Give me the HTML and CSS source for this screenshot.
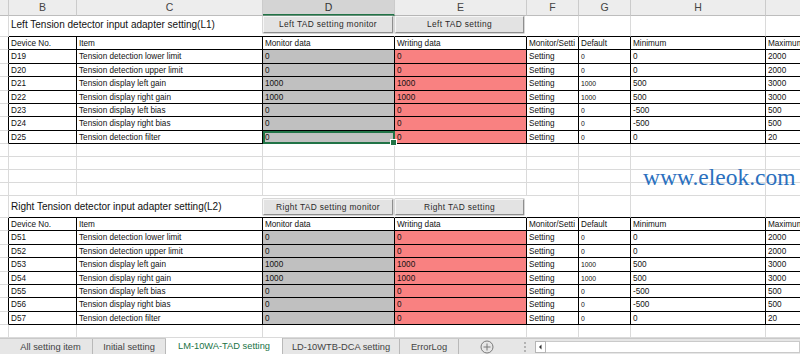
FILE: index.html
```html
<!DOCTYPE html>
<html>
<head>
<meta charset="utf-8">
<link rel="stylesheet" href="styles.css">
</head>
<body>
<div class="app">
  <div class="sheet">
    <div class="row colhead h16"><div></div><div>B</div><div>C</div><div class="sel">D</div><div>E</div><div>F</div><div>G</div><div>H</div><div></div></div>

    <div class="row title h21"><div></div><div class="ttl">Left Tension detector input adapter setting(L1)</div><div class="bcell"><div class="btn">Left TAD setting monitor</div></div><div class="bcell"><div class="btn b2">Left TAD setting</div></div><div></div><div></div><div></div><div></div></div>

    <div class="row t h13"><div></div><div>Device No.</div><div>Item</div><div>Monitor data</div><div>Writing data</div><div><span class="clip">Monitor/Setting</span></div><div>Default</div><div>Minimum</div><div>Maximum</div></div>
    <div class="row t h14"><div></div><div>D19</div><div>Tension detection lower limit</div><div class="mon">0</div><div class="wr">0</div><div>Setting</div><div class="def">0</div><div>0</div><div>2000</div></div>
    <div class="row t h13"><div></div><div>D20</div><div>Tension detection upper limit</div><div class="mon">0</div><div class="wr">0</div><div>Setting</div><div class="def">0</div><div>0</div><div>2000</div></div>
    <div class="row t h14"><div></div><div>D21</div><div>Tension display left gain</div><div class="mon">1000</div><div class="wr">1000</div><div>Setting</div><div class="def">1000</div><div>500</div><div>3000</div></div>
    <div class="row t h13"><div></div><div>D22</div><div>Tension display right gain</div><div class="mon">1000</div><div class="wr">1000</div><div>Setting</div><div class="def">1000</div><div>500</div><div>3000</div></div>
    <div class="row t h13"><div></div><div>D23</div><div>Tension display left bias</div><div class="mon">0</div><div class="wr">0</div><div>Setting</div><div class="def">0</div><div>-500</div><div>500</div></div>
    <div class="row t h14"><div></div><div>D24</div><div>Tension display right bias</div><div class="mon">0</div><div class="wr">0</div><div>Setting</div><div class="def">0</div><div>-500</div><div>500</div></div>
    <div class="row t h13"><div></div><div>D25</div><div>Tension detection filter</div><div class="mon cur">0</div><div class="wr">0</div><div>Setting</div><div class="def">0</div><div>0</div><div>20</div></div>

    <div class="row h13"><div></div><div></div><div></div><div></div><div></div><div></div><div></div><div></div><div></div></div>
    <div class="row h13"><div></div><div></div><div></div><div></div><div></div><div></div><div></div><div></div><div></div></div>
    <div class="row h13"><div></div><div></div><div></div><div></div><div></div><div></div><div></div><div></div><div></div></div>
    <div class="row h13"><div></div><div></div><div></div><div></div><div></div><div></div><div></div><div></div><div></div></div>

    <div class="row title h22"><div></div><div class="ttl t2">Right Tension detector input adapter setting(L2)</div><div class="bcell"><div class="btn m3">Right TAD setting monitor</div></div><div class="bcell"><div class="btn b2 m3">Right TAD setting</div></div><div></div><div></div><div></div><div></div></div>

    <div class="row t h13"><div></div><div>Device No.</div><div>Item</div><div>Monitor data</div><div>Writing data</div><div><span class="clip">Monitor/Setting</span></div><div>Default</div><div>Minimum</div><div>Maximum</div></div>
    <div class="row t h14"><div></div><div>D51</div><div>Tension detection lower limit</div><div class="mon">0</div><div class="wr">0</div><div>Setting</div><div class="def">0</div><div>0</div><div>2000</div></div>
    <div class="row t h13"><div></div><div>D52</div><div>Tension detection upper limit</div><div class="mon">0</div><div class="wr">0</div><div>Setting</div><div class="def">0</div><div>0</div><div>2000</div></div>
    <div class="row t h14"><div></div><div>D53</div><div>Tension display left gain</div><div class="mon">1000</div><div class="wr">1000</div><div>Setting</div><div class="def">1000</div><div>500</div><div>3000</div></div>
    <div class="row t h13"><div></div><div>D54</div><div>Tension display right gain</div><div class="mon">1000</div><div class="wr">1000</div><div>Setting</div><div class="def">1000</div><div>500</div><div>3000</div></div>
    <div class="row t h13"><div></div><div>D55</div><div>Tension display left bias</div><div class="mon">0</div><div class="wr">0</div><div>Setting</div><div class="def">0</div><div>-500</div><div>500</div></div>
    <div class="row t h14"><div></div><div>D56</div><div>Tension display right bias</div><div class="mon">0</div><div class="wr">0</div><div>Setting</div><div class="def">0</div><div>-500</div><div>500</div></div>
    <div class="row t h13"><div></div><div>D57</div><div>Tension detection filter</div><div class="mon">0</div><div class="wr">0</div><div>Setting</div><div class="def">0</div><div>0</div><div>20</div></div>

    <div class="row h13"><div></div><div></div><div></div><div></div><div></div><div></div><div></div><div></div><div></div></div>
  </div>

  <div class="tabs">
    <div class="tab w1">All setting item</div>
    <div class="tab w2">Initial setting</div>
    <div class="tab w3 on">LM-10WA-TAD setting</div>
    <div class="tab w4">LD-10WTB-DCA setting</div>
    <div class="tab w5">ErrorLog</div>
    <div class="add"><svg width="14" height="14" viewBox="0 0 14 14"><circle cx="7" cy="7" r="6" fill="none" stroke="#7a7a7a" stroke-width="1"/><path d="M7 3.5v7M3.5 7h7" stroke="#7a7a7a" stroke-width="1"/></svg></div>
    <div class="dots"><svg width="4" height="12" viewBox="0 0 4 12"><circle cx="2" cy="2" r="0.9" fill="#9a9a9a"/><circle cx="2" cy="6" r="0.9" fill="#9a9a9a"/><circle cx="2" cy="10" r="0.9" fill="#9a9a9a"/></svg></div>
    <div class="hs"><div class="arr"><svg width="9" height="10" viewBox="0 0 9 10"><path d="M5.5 2.5L3 5l2.5 2.5z" fill="#333"/></svg></div><div class="track"></div></div>
  </div>

  <div class="wm">www.eleok.com</div>
</div>
</body>
</html>
```

FILE: styles.css
```css
* { box-sizing: border-box; margin: 0; padding: 0; }
html, body { width: 800px; height: 354px; overflow: hidden; background: #fff; }
body { font-family: "Liberation Sans", Arial, sans-serif; color: #111; }

.app { position: relative; width: 800px; height: 354px; overflow: hidden; display: flex; flex-direction: column; }
.sheet { width: 830px; flex: 1; display: flex; flex-direction: column; }

.row { display: grid; grid-template-columns: 9px 68px 186px 132px 132px 52px 52px 135px 64px; }
.row > div {
  border-right: 1px solid #dadada;
  border-bottom: 1px solid #dadada;
  overflow: hidden;
  white-space: nowrap;
  font-size: 8.2px;
  line-height: 11px;
  padding-left: 2px;
  display: flex;
  align-items: center;
}
.clip { display: block; width: 46px; overflow: hidden; white-space: nowrap; }
.h13 { height: 13px; }
.h14 { height: 14px; }
.h16 { height: 16px; }
.h21 { height: 21px; }
.h22 { height: 22px; }

/* column header */
.colhead > div {
  background: #ededed;
  border-right-color: #cbcbcb;
  border-bottom-color: #bdbdbd;
  justify-content: center;
  padding-left: 0;
  font-size: 10.5px;
  color: #444;
}
.colhead > div.sel { background: #d4d4d4; border-bottom: 2px solid #217346; color: #333; }

/* title rows */
.title > div:not(:first-child) { border-bottom-color: #000; }
.title .ttl {
  grid-column: span 2;
  font-size: 10px;
  line-height: 12px;
  align-items: flex-start;
  padding-top: 3px;
  color: #111;
  border-right: none;
}
.title .ttl.t2 { padding-top: 5px; }
.title .bcell { padding-left: 0; align-items: flex-start; overflow: visible; border-right-color: transparent; }

.btn {
  width: 130px;
  height: 17px;
  background: #e3e3e3;
  border: 1px solid;
  border-color: #f6f6f6 #8e8e8e #8e8e8e #f6f6f6;
  box-shadow: 0 0 0 0.5px #b0b0b0;
  display: flex;
  align-items: center;
  justify-content: center;
  font-size: 8.4px;
  letter-spacing: 0.35px;
  color: #2a2a2a;
}
.btn.b2 { width: 129px; }
.btn.m3 { margin-top: 3px; height: 16px; }

/* table rows */
.t > div:not(:first-child) { border-color: #000; }
.t > div:first-child { border-right-color: #000; }
.t > div.mon { background: #c0c0c0; }
.t > div.wr { background: #f98181; }
.t > div.def { font-size: 6.8px; }
.t > div.cur {
  position: relative;
  overflow: visible;
  outline: 2px solid #217346;
  outline-offset: -2px;
}
.t > div.cur::after {
  content: "";
  position: absolute;
  right: -3px;
  bottom: -3px;
  width: 5px;
  height: 5px;
  background: #217346;
  border: 1px solid #fff;
}

/* sheet tabs */
.tabs {
  height: 16px;
  background: #e6e6e6;
  border-top: 1px solid #c9c9c9;
  display: flex;
  padding-left: 9px;
  font-size: 9.3px;
  color: #444;
}
.tab { display: flex; align-items: center; justify-content: center; border-right: 1px solid #b9b9b9; white-space: nowrap; }
.tab.on { background: #fff; color: #217346; margin-top: -1px; }
.w1 { width: 84px; }
.w2 { width: 73px; }
.w3 { width: 117px; }
.w4 { width: 117px; }
.w5 { width: 59px; }
.add { width: 56px; display: flex; align-items: center; justify-content: center; }
.dots { width: 20px; display: flex; align-items: center; justify-content: center; }
.hs { flex: 1; display: flex; align-items: center; }
.arr { width: 11px; height: 12px; border: 1px solid #b5b5b5; background: #fff; display: flex; align-items: center; justify-content: center; }
.track { flex: 1; height: 12px; background: #fff; border: 1px solid #cacaca; border-left: none; }

/* watermark */
.wm {
  position: absolute;
  left: 643px;
  top: 166px;
  font-family: "Liberation Serif", "Times New Roman", serif;
  font-size: 23.5px;
  line-height: 1;
  color: #2b70be;
}
```
